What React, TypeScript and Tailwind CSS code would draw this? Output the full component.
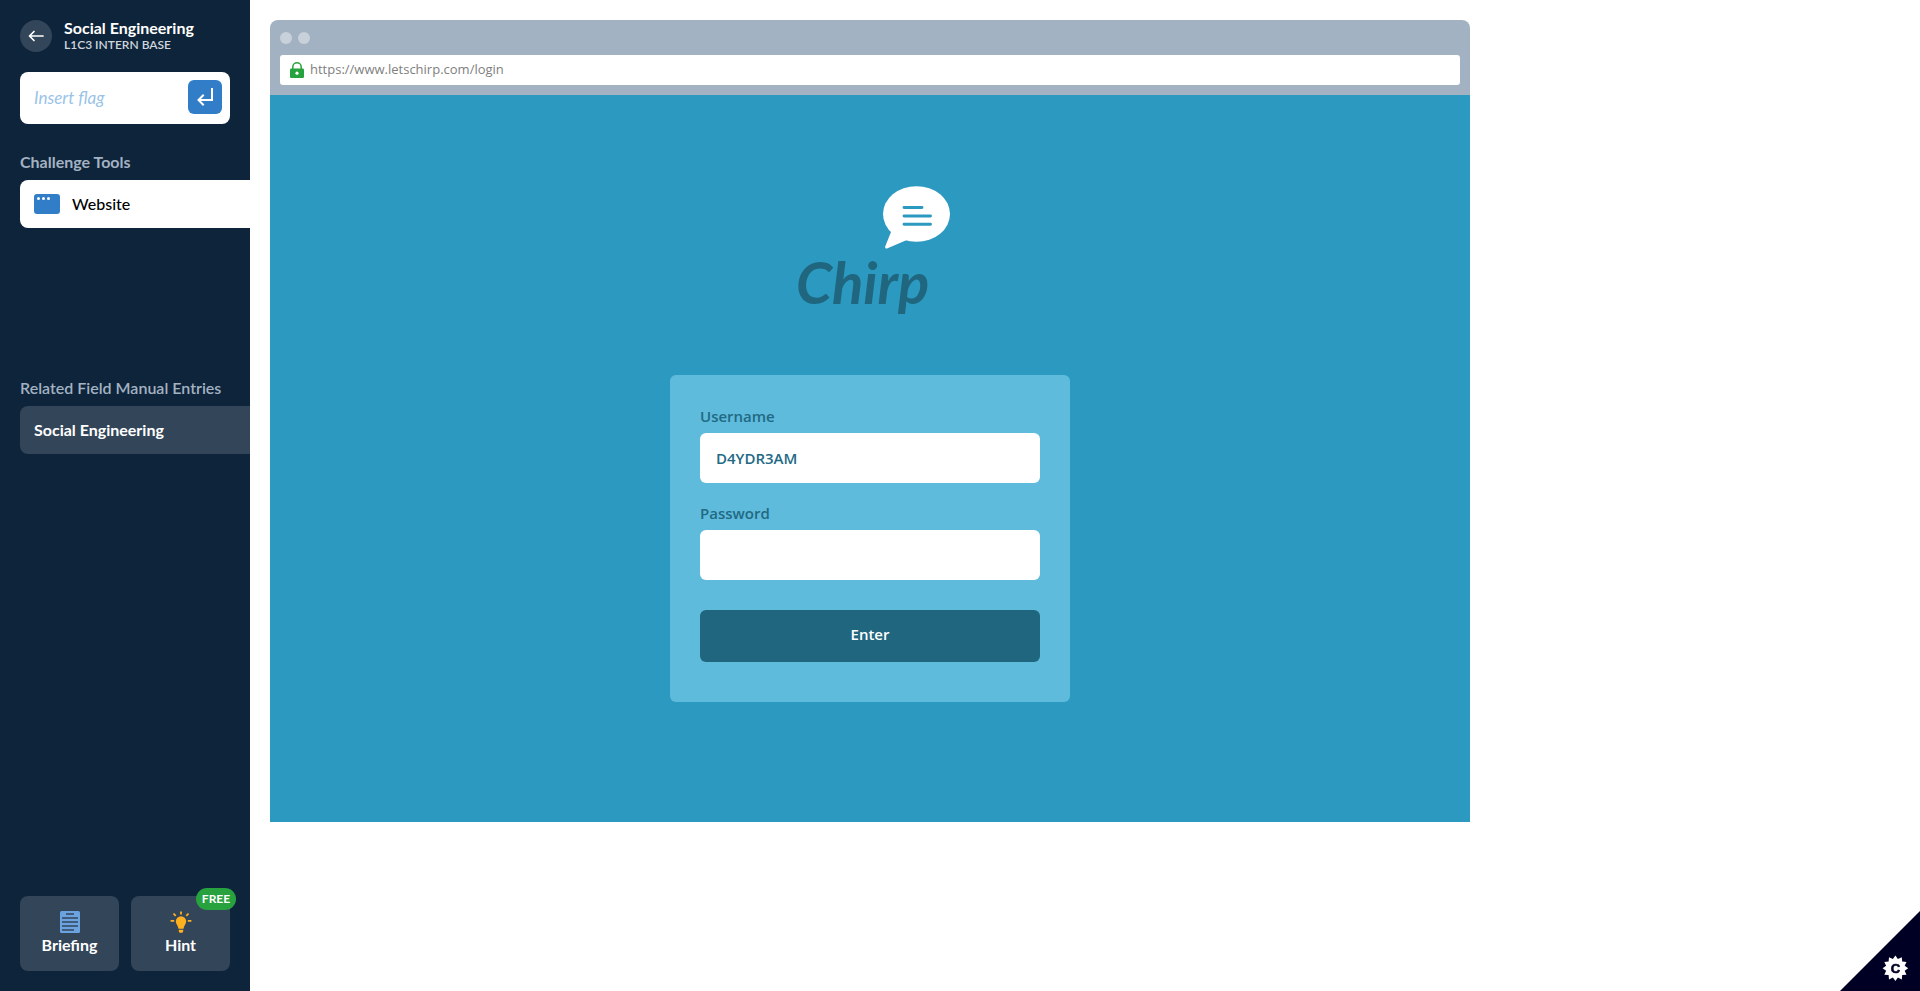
import { useId } from "react";

const sidebarFont = "font-['Lato','Liberation_Sans',sans-serif]";

function BackIcon() {
  return (
    <svg viewBox="0 0 16 12" className="h-3 w-4" fill="none" stroke="white" strokeWidth="1.7" strokeLinecap="round" strokeLinejoin="round" aria-hidden="true">
      <path d="M15 6H1.5M6 1.5 1.5 6 6 10.5" />
    </svg>
  );
}

function ReturnIcon() {
  return (
    <svg viewBox="0 0 18 20" className="h-5 w-[18px]" fill="none" stroke="white" strokeWidth="2" strokeLinecap="square" aria-hidden="true">
      <path d="M16 2v11H3M7 8.5 2.5 13 7 17.5" />
    </svg>
  );
}

function WindowIcon() {
  return (
    <svg viewBox="0 0 26 20" className="h-5 w-[26px] shrink-0" aria-hidden="true">
      <rect width="26" height="20" rx="3" fill="#317dc8" />
      <circle cx="4.5" cy="4.5" r="1.5" fill="white" />
      <circle cx="9.5" cy="4.5" r="1.5" fill="white" />
      <circle cx="14.5" cy="4.5" r="1.5" fill="white" />
    </svg>
  );
}

function BriefingIcon() {
  return (
    <svg viewBox="0 0 20 22" className="h-[22px] w-5" aria-hidden="true">
      <rect width="20" height="22" rx="1.5" fill="#6aa3df" />
      <path d="M6 3h8M2 7h16M2 11h16M2 15h16M2 19h12" stroke="#334559" strokeWidth="1.7" />
    </svg>
  );
}

function BulbIcon() {
  return (
    <svg viewBox="0 0 22 22" className="h-[22px] w-[22px]" fill="#ffb01f" aria-hidden="true">
      <path d="M11 5.2a5.2 5.2 0 0 1 5.2 5.2c0 2.6-2.3 3.9-2.7 7.4h-5c-.4-3.500-2.700-4.800-2.700-7.400A5.200 5.200 0 0 1 11 5.200Z" />
      <path d="M8.800 18.800h4.400v1.200c0 1-.7 1.800-1.500 1.800h-1.400c-.8 0-1.500-.8-1.500-1.800Z" />
      <path d="M11 .4v3M3.500 2.500l2.200 2.300M18.500 2.500l-2.200 2.300M.6 9.800h3.600M17.800 9.800h3.600" stroke="#ffb01f" strokeWidth="1.800" fill="none" />
    </svg>
  );
}

function LockIcon() {
  return (
    <svg viewBox="0 0 14 16" className="h-4 w-3.5 shrink-0" aria-hidden="true">
      <path d="M2.800 7.500V5a4.200 4.200 0 0 1 8.400 0v2.500" fill="none" stroke="#28a13f" strokeWidth="1.500" />
      <rect y="6.500" width="14" height="9.500" rx="1.200" fill="#28a13f" />
      <circle cx="7" cy="11.200" r="1.600" fill="white" />
    </svg>
  );
}

function ChirpLogo() {
  return (
    <svg viewBox="0 0 160 142" className="h-[142px] w-40" role="img" aria-label="Chirp">
      <ellipse cx="126.500" cy="28" rx="33.500" ry="27.800" fill="white" />
      <path d="M102 43.500 95.400 60c-.9 1.900.4 3.200 2.200 2.300L118 53.500Z" fill="white" />
      <path d="M114 21.500h18M114 30h26.500M114 38.300h26.500" stroke="#2c99c0" strokeWidth="2.900" strokeLinecap="round" />
      <text x="6" y="118" fill="#1f667e" className="font-['Lato','Liberation_Sans',sans-serif] text-[58px] font-bold italic">Chirp</text>
    </svg>
  );
}

function GearBadge() {
  const points = Array.from({ length: 24 }, (_, i) => {
    const r = i % 2 === 0 ? 12.8 : 9.6;
    const a = (Math.PI * i) / 12;
    return `${(55.4 + r * Math.cos(a)).toFixed(2)},${(57.3 + r * Math.sin(a)).toFixed(2)}`;
  }).join(" ");
  return (
    <svg viewBox="0 0 80 80" className="h-20 w-20" aria-hidden="true">
      <path d="M80 0v80H0Z" fill="#000024" />
      <polygon points={points} fill="white" />
      <text x="55.400" y="62" textAnchor="middle" fill="#000024" stroke="#000024" strokeWidth=".6" className="font-['Liberation_Sans',sans-serif] text-[13px] font-bold">C</text>
    </svg>
  );
}

function Field({ label, type, value }: { label: string; type: string; value?: string }) {
  const id = useId();
  return (
    <div className="flex flex-col">
      <label htmlFor={id} className="h-7 text-[15px] leading-[22px] font-semibold text-[#226984]">{label}</label>
      <input id={id} type={type} defaultValue={value} className="h-[50px] w-full rounded-md bg-white px-4 text-[15px] font-semibold text-[#226984] outline-none" />
    </div>
  );
}

function Sidebar() {
  return (
    <aside className={`${sidebarFont} flex w-[250px] shrink-0 flex-col bg-[#0e243a] py-5 pl-5 text-base text-white`}>
      <header className="flex h-8 items-center gap-3">
        <button type="button" aria-label="Back" className="flex size-8 items-center justify-center rounded-full bg-[#334559]">
          <BackIcon />
        </button>
        <div>
          <h1 className="text-base leading-[18px] font-bold">Social Engineering</h1>
          <p className="text-xs leading-4 font-semibold text-[#cfd6dd]">L1C3 INTERN BASE</p>
        </div>
      </header>

      <form className="mt-5 mr-5 flex h-[52px] items-center rounded-lg bg-white pr-2 pl-3.5" onSubmit={(e) => e.preventDefault()}>
        <input aria-label="Insert flag" placeholder="Insert flag" className="min-w-0 flex-1 text-[17px] text-black italic outline-none placeholder:text-[#9ac3e8]" />
        <button type="submit" aria-label="Submit flag" className="mb-0.5 flex size-[34px] items-center justify-center rounded-md bg-[#317dc8]">
          <ReturnIcon />
        </button>
      </form>

      <section className="mt-[26px] min-h-[200px]">
        <h2 className="leading-6 font-bold text-[#a3b2c2]">Challenge Tools</h2>
        <a href="#website" className="mt-1.5 flex h-12 items-center gap-3 rounded-l-lg bg-white pl-3.5 font-medium text-black">
          <WindowIcon />
          Website
        </a>
      </section>

      <section className="mt-[26px]">
        <h2 className="leading-6 font-semibold text-[#a3b2c2]">Related Field Manual Entries</h2>
        <a href="#manual" className="mt-1.5 flex h-12 items-center rounded-l-lg bg-[#334559] pl-3.5 font-bold">Social Engineering</a>
      </section>

      <div className="mt-auto mr-5 grid grid-cols-2 gap-3 font-bold">
        <button type="button" className="flex h-[75px] flex-col items-center rounded-lg bg-[#334559] pt-[15px]">
          <BriefingIcon />
          Briefing
        </button>
        <button type="button" className="relative flex h-[75px] flex-col items-center rounded-lg bg-[#334559] pt-[15px]">
          <BulbIcon />
          Hint
          <span className="absolute -top-2 -right-1.5 flex h-[22px] w-10 items-center justify-center rounded-full bg-[#28a13f] text-xs">FREE</span>
        </button>
      </div>
    </aside>
  );
}

function LoginForm() {
  return (
    <form className="mt-[47px] flex w-full max-w-[400px] flex-col rounded-md bg-[#5ebbdb] px-[30px] pt-[30px] pb-10" onSubmit={(e) => e.preventDefault()}>
      <div className="flex flex-col gap-[19px]">
        <Field label="Username" type="text" value="D4YDR3AM" />
        <Field label="Password" type="password" />
      </div>
      <button type="submit" className="mt-[30px] h-[52px] rounded-md bg-[#1f667e] pb-1 text-[15px] font-semibold text-white">Enter</button>
    </form>
  );
}

export default function App() {
  return (
    <div className="flex min-h-screen bg-white">
      <Sidebar />
      <main className="min-w-0 flex-1 p-5 font-['Open_Sans','Noto_Sans',sans-serif]">
        <div className="w-full max-w-[1200px] overflow-hidden rounded-t-lg">
          <div className="bg-[#a3b2c2] p-2.5 pt-3">
            <div className="mb-[11px] flex gap-1.5">
              <span className="size-3 rounded-full bg-[#c8d0d9]" />
              <span className="size-3 rounded-full bg-[#c8d0d9]" />
            </div>
            <div className="flex h-[30px] items-center gap-1.5 rounded-[3px] bg-white px-2.5 text-[13px] text-[#808080]">
              <LockIcon />
              https://www.letschirp.com/login
            </div>
          </div>
          <div className="flex flex-col items-center bg-[#2c99c0] px-5 pt-[91px] pb-[120px]">
            <ChirpLogo />
            <LoginForm />
          </div>
        </div>
      </main>
      <button type="button" aria-label="Settings" className="fixed right-0 bottom-0">
        <GearBadge />
      </button>
    </div>
  );
}
